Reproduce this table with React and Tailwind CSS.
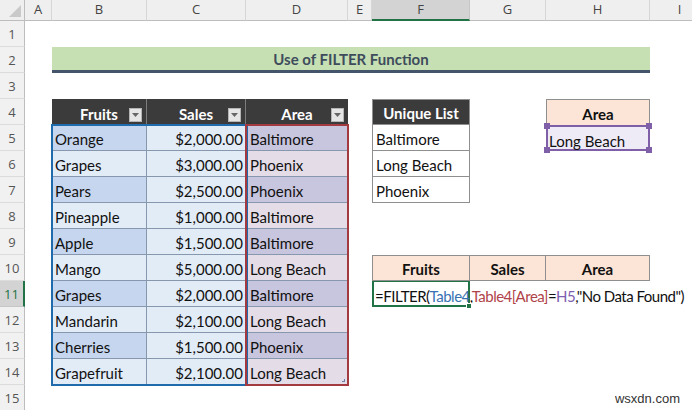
const COLS = [
  { l: 'A', c: 'col-start-2' },
  { l: 'B', c: 'col-start-3' },
  { l: 'C', c: 'col-start-4' },
  { l: 'D', c: 'col-start-5' },
  { l: 'E', c: 'col-start-6' },
  { l: 'F', c: 'col-start-7', on: true },
  { l: 'G', c: 'col-start-8' },
  { l: 'H', c: 'col-start-9' },
  { l: 'I', c: 'col-start-10' },
]

const ROWS = [
  'row-start-2', 'row-start-3', 'row-start-4', 'row-start-5', 'row-start-6',
  'row-start-7', 'row-start-8', 'row-start-9', 'row-start-10', 'row-start-11',
  'row-start-12', 'row-start-13', 'row-start-14', 'row-start-15', 'row-start-16',
]

const fruits = [
  ['Orange', '$2,000.00', 'Baltimore'],
  ['Grapes', '$3,000.00', 'Phoenix'],
  ['Pears', '$2,500.00', 'Phoenix'],
  ['Pineapple', '$1,000.00', 'Baltimore'],
  ['Apple', '$1,500.00', 'Baltimore'],
  ['Mango', '$5,000.00', 'Long Beach'],
  ['Grapes', '$2,000.00', 'Baltimore'],
  ['Mandarin', '$2,100.00', 'Long Beach'],
  ['Cherries', '$1,500.00', 'Phoenix'],
  ['Grapefruit', '$2,100.00', 'Long Beach'],
]

const cell = 'flex items-end pb-[1px] leading-[20px]'

function FilterButton() {
  return (
    <span className="absolute right-[4px] bottom-[3px] flex h-[14px] w-[13px] items-center justify-center border border-[#b5b5b5] bg-[#e6e6e6]">
      <svg width="7" height="4" viewBox="0 0 7 4">
        <path d="M0 0h7L3.5 4z" fill="#666" />
      </svg>
    </span>
  )
}

function Handle({ className }) {
  return <span className={`absolute h-[6px] w-[6px] bg-[#7e5fa8] ${className}`} />
}

export default function App() {
  return (
    <div className="relative h-[410px] w-[692px] overflow-hidden bg-white font-['Lato','Liberation_Sans',sans-serif] text-[15px] text-[#111]">
      <div className="grid grid-cols-[25px_27px_95px_99px_102px_24px_98px_76px_104px_60px] grid-rows-[21px_repeat(15,26px)]">
        {/* corner */}
        <div className="col-start-1 row-start-1 flex items-end justify-end border-r border-b border-[#bdbdbd] bg-[#efefef] pr-[3px] pb-[3px]">
          <svg width="12" height="12" viewBox="0 0 12 12">
            <path d="M12 0v12H0z" fill="#c9c9c9" />
          </svg>
        </div>

        {COLS.map((c) => (
          <div
            key={c.l}
            className={`${c.c} row-start-1 flex items-center justify-center font-['Open_Sans',sans-serif] text-[13px] text-[#444] ${
              c.on
                ? 'border-r border-r-[#c6c6c6] border-b-2 border-b-[#217346] bg-[#d3d3d3]'
                : 'border-r border-r-[#d6d6d6] border-b border-b-[#bdbdbd] bg-[#efefef]'
            }`}
          >
            {c.l}
          </div>
        ))}

        {ROWS.map((r, i) => (
          <div
            key={r}
            className={`col-start-1 ${r} flex items-end justify-center pb-[2px] font-['Open_Sans',sans-serif] text-[13px] ${
              i === 10
                ? 'border-r-2 border-r-[#217346] border-b border-b-[#c6c6c6] bg-[#d3d3d3] text-[#217346]'
                : 'border-r border-r-[#bdbdbd] border-b border-b-[#dcdcdc] bg-[#f1f1f1] text-[#555]'
            }`}
          >
            {i + 1}
          </div>
        ))}

        {/* title */}
        <div className="col-start-3 col-span-7 row-start-3 flex items-center justify-center border-b-[3px] border-[#44546a] bg-[#c6e0b4] pt-[1px] font-bold text-[#3e4c5c]">
          Use of FILTER Function
        </div>

        {/* main table */}
        <div className="relative col-start-3 col-span-3 row-start-5 row-span-11 flex flex-col">
          <div className="flex h-[26px] bg-[#3b3b3b] font-bold text-white">
            <div className={`${cell} relative w-[95px] justify-center border-r border-[#7c7c7c]`}>
              Fruits
              <FilterButton />
            </div>
            <div className={`${cell} relative w-[99px] justify-center border-r border-[#7c7c7c]`}>
              Sales
              <FilterButton />
            </div>
            <div className={`${cell} relative w-[102px] justify-center`}>
              Area
              <FilterButton />
            </div>
          </div>
          {fruits.map(([f, s, a], i) => (
            <div key={i} className="flex h-[26px]">
              <div className={`${cell} w-[95px] border-r border-b border-[#8797ad] pl-[3px] ${i % 2 === 0 ? 'bg-[#c6d6ee]' : 'bg-[#e2ecf7]'}`}>
                {f}
              </div>
              <div className={`${cell} w-[99px] justify-end border-r border-b border-[#8797ad] bg-[#e2ecf7] pr-[2px]`}>
                {s}
              </div>
              <div className={`${cell} w-[102px] border-b border-[#8797ad] pl-[4px] ${i % 2 === 0 ? 'bg-[#c8c5df]' : 'bg-[#e4dde8]'}`}>
                {a}
              </div>
            </div>
          ))}
          {/* selection outlines */}
          <div className="pointer-events-none absolute top-[25px] left-[-1px] h-[262px] w-[197px] border-2 border-[#1f6bab]" />
          <div className="pointer-events-none absolute top-[25px] left-[193px] h-[262px] w-[104px] border-2 border-[#a33a3f]">
            <span className="absolute right-[2px] bottom-[2px] h-[3px] w-[3px] border-r border-b border-[#6a7fa8]" />
          </div>
        </div>

        {/* unique list */}
        <div className="col-start-7 row-start-5 row-span-4 flex flex-col">
          <div className={`${cell} h-[26px] justify-center border border-[#8f8f8f] bg-[#3b3b3b] font-bold text-white`}>
            Unique List
          </div>
          {['Baltimore', 'Long Beach', 'Phoenix'].map((u) => (
            <div key={u} className={`${cell} h-[26px] border-x border-b border-[#8f8f8f] pl-[3px]`}>
              {u}
            </div>
          ))}
        </div>

        {/* criteria */}
        <div className="col-start-9 row-start-5 row-span-2 flex flex-col">
          <div className={`${cell} h-[26px] justify-center border border-b-0 border-[#8f8f8f] bg-[#fce4d6] font-bold`}>
            Area
          </div>
          <div className="relative flex h-[26px] items-start border-2 border-[#7e5fa8] bg-[#eeebf7] pt-[4px] pl-[1px] leading-[20px]">
            Long Beach
            <Handle className="-top-[4px] -left-[4px]" />
            <Handle className="-top-[4px] -right-[4px]" />
            <Handle className="-bottom-[4px] -left-[4px]" />
            <Handle className="-bottom-[4px] -right-[4px]" />
          </div>
        </div>

        {/* result */}
        <div className="col-start-7 col-span-3 row-start-11 row-span-2 flex flex-col">
          <div className="flex h-[26px] bg-[#fce4d6] font-bold">
            <div className={`${cell} w-[98px] justify-center border border-[#8f8f8f]`}>Fruits</div>
            <div className={`${cell} w-[76px] justify-center border-y border-r border-[#8f8f8f]`}>Sales</div>
            <div className={`${cell} w-[104px] justify-center border-y border-r border-[#8f8f8f]`}>Area</div>
          </div>
          <div className="relative flex h-[26px] w-[98px] items-start border-2 border-t-[1px] border-[#217346] pt-[4px] pl-[1px] leading-[20px] tracking-[-0.5px] whitespace-nowrap">
            <span>
              =FILTER(<span className="text-[#3773b3]">Table4</span>,
              <span className="text-[#b04349]">Table4[Area]</span>=
              <span className="text-[#7e5fb0]">H5</span>,"No Data Found")
            </span>
            <span className="absolute -right-[4px] -bottom-[4px] h-[6px] w-[6px] border border-white bg-[#217346]" />
          </div>
        </div>
      </div>

      <div className="absolute right-[12px] bottom-[2px] font-['Liberation_Sans',sans-serif] text-[13px] text-[#333]">
        wsxdn.com
      </div>
    </div>
  )
}
